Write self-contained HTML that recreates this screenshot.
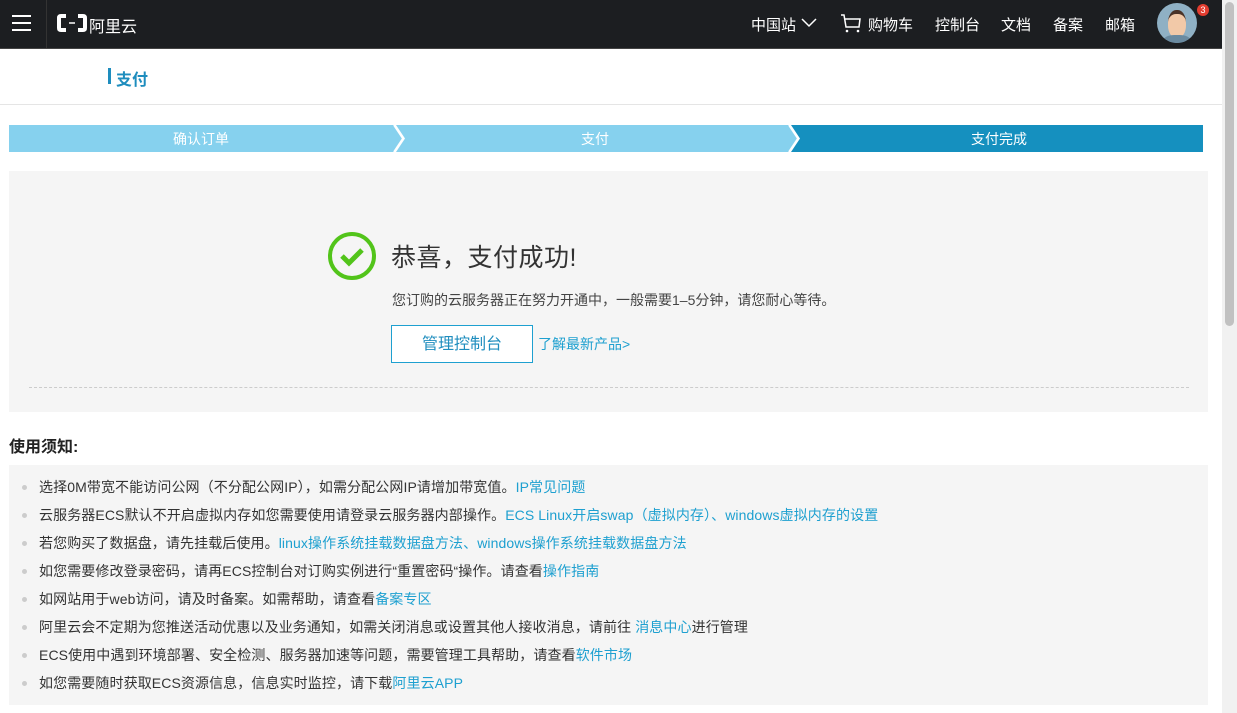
<!DOCTYPE html><html><head><meta charset="utf-8"><style>
body{margin:0;width:1237px;height:713px;overflow:hidden;background:#fff;font-family:"Liberation Sans","Noto Sans CJK SC",sans-serif;color:#333;position:relative}
.a{position:absolute}
.hd{left:0;top:0;width:1222px;height:48px;background:#1c1e21;border-bottom:1px solid #444}
.nav{top:14px;color:#fff;font-size:15px}
.sb{right:0;top:0;width:15px;height:713px;background:#f1f1f1}
.th{right:3px;top:2px;width:9px;height:324px;background:#c1c1c1;border-radius:5px}
.lnk{color:#1ea0d0}
ul{margin:0;padding:0;list-style:none}
li{height:28px;line-height:28px;font-size:14px;padding-left:30px;position:relative;color:#333;letter-spacing:0.1px}
li:before{content:"";position:absolute;left:13px;top:12px;width:5px;height:5px;border-radius:50%;background:#ccc}
</style></head><body>
<div class="a hd"></div>
<div class="a" style="left:46px;top:0;width:1px;height:48px;background:#333"></div>
<div class="a" style="left:12px;top:15px;width:19px;height:2px;background:#fff;box-shadow:0 7px 0 #fff,0 14px 0 #fff"></div>
<svg class="a" style="left:56px;top:13px" width="32" height="20"><path d="M10 3H5Q3 3 3 5V15Q3 17 5 17H10M22 3H27Q29 3 29 5V15Q29 17 27 17H22" stroke="#fff" stroke-width="4" fill="none"/><path d="M13 10H19" stroke="#fff" stroke-width="1.5"/></svg>
<div class="a" style="left:89px;top:13px;color:#fff;font-size:16px">阿里云</div>
<div class="a nav" style="left:751px">中国站</div>
<svg class="a" style="left:801px;top:18px" width="16" height="10"><path d="M1 1L8 8L15 1" stroke="#fff" stroke-width="1.5" fill="none"/></svg>
<svg class="a" style="left:840px;top:13px" width="22" height="20"><path d="M1 2H4L6 14H19L20 6H5" stroke="#fff" stroke-width="1.5" fill="none"/><circle cx="7" cy="18" r="1.3" fill="#fff"/><circle cx="18" cy="18" r="1.3" fill="#fff"/></svg>
<div class="a nav" style="left:868px">购物车</div>
<div class="a nav" style="left:935px">控制台</div>
<div class="a nav" style="left:1001px">文档</div>
<div class="a nav" style="left:1053px">备案</div>
<div class="a nav" style="left:1105px">邮箱</div>
<div class="a" style="left:1157px;top:3px;width:40px;height:40px;border-radius:50%;background:#8fb0c4;overflow:hidden"><div class="a" style="left:11px;top:7px;width:18px;height:24px;border-radius:45%;background:#f2c9a8;border-top:4px solid #4a3328"></div><div class="a" style="left:7px;top:32px;width:26px;height:12px;background:#6a8aa0;border-radius:40%"></div></div>
<div class="a" style="left:1197px;top:4px;width:12px;height:12px;border-radius:50%;background:#e23c2f;color:#fff;font-size:9px;text-align:center;line-height:12px">3</div>
<div class="a sb"><div class="a th"></div></div>
<div class="a" style="left:108px;top:68px;width:3px;height:16px;background:#1e8dbe"></div>
<div class="a" style="left:116px;top:66px;font-size:16px;color:#1e8dbe;font-weight:bold">支付</div>
<div class="a" style="left:0;top:104px;width:1222px;height:1px;background:#e5e5e5"></div>
<svg class="a" style="left:9px;top:125px" width="1194" height="27"><path d="M0 0H385L394 13.5L385 27H0Z" fill="#86d1ee"/><path d="M387 0H780L789 13.5L780 27H387L396 13.5Z" fill="#86d1ee"/><path d="M782 0H1194V27H782L791 13.5Z" fill="#1590bf"/><path d="M385 0L394 13.5L385 27M780 0L789 13.5L780 27" stroke="#fff" stroke-width="2" fill="none"/></svg>
<div class="a" style="left:173px;top:129px;color:#fff;font-size:14px">确认订单</div>
<div class="a" style="left:581px;top:129px;color:#fff;font-size:14px">支付</div>
<div class="a" style="left:971px;top:129px;color:#fff;font-size:14px">支付完成</div>
<div class="a" style="left:9px;top:171px;width:1199px;height:241px;background:#f5f5f5"></div>
<svg class="a" style="left:327px;top:231px" width="50" height="50"><circle cx="25" cy="25" r="22" stroke="#52c41a" stroke-width="4" fill="none"/><path d="M15 25L22 32L35 19" stroke="#52c41a" stroke-width="5" fill="none"/></svg>
<div class="a" style="left:391px;top:238px;font-size:25px;color:#333;letter-spacing:0.5px">恭喜，支付成功!</div>
<div class="a" style="left:392px;top:290px;font-size:14px;color:#444">您订购的云服务器正在努力开通中，一般需要1–5分钟，请您耐心等待。</div>
<div class="a" style="left:391px;top:325px;width:140px;height:36px;border:1px solid #1ea0d0;background:#fff;color:#1e8dbe;font-size:16px;text-align:center;line-height:38px">管理控制台</div>
<div class="a lnk" style="left:538px;top:334px;font-size:14px">了解最新产品&gt;</div>
<div class="a" style="left:29px;top:387px;width:1160px;border-top:1px dashed #ccc"></div>
<div class="a" style="left:9px;top:433px;font-size:16px;font-weight:bold;color:#222">使用须知:</div>
<div class="a" style="left:9px;top:465px;width:1199px;height:240px;background:#f5f5f5;padding-top:8px;box-sizing:border-box">
<ul>
<li>选择0M带宽不能访问公网（不分配公网IP），如需分配公网IP请增加带宽值。<span class="lnk">IP常见问题</span></li>
<li>云服务器ECS默认不开启虚拟内存如您需要使用请登录云服务器内部操作。<span class="lnk">ECS Linux开启swap（虚拟内存）、windows虚拟内存的设置</span></li>
<li>若您购买了数据盘，请先挂载后使用。<span class="lnk">linux操作系统挂载数据盘方法、windows操作系统挂载数据盘方法</span></li>
<li>如您需要修改登录密码，请再ECS控制台对订购实例进行“重置密码“操作。请查看<span class="lnk">操作指南</span></li>
<li>如网站用于web访问，请及时备案。如需帮助，请查看<span class="lnk">备案专区</span></li>
<li>阿里云会不定期为您推送活动优惠以及业务通知，如需关闭消息或设置其他人接收消息，请前往 <span class="lnk">消息中心</span>进行管理</li>
<li>ECS使用中遇到环境部署、安全检测、服务器加速等问题，需要管理工具帮助，请查看<span class="lnk">软件市场</span></li>
<li>如您需要随时获取ECS资源信息，信息实时监控，请下载<span class="lnk">阿里云APP</span></li>
</ul></div>
</body></html>
